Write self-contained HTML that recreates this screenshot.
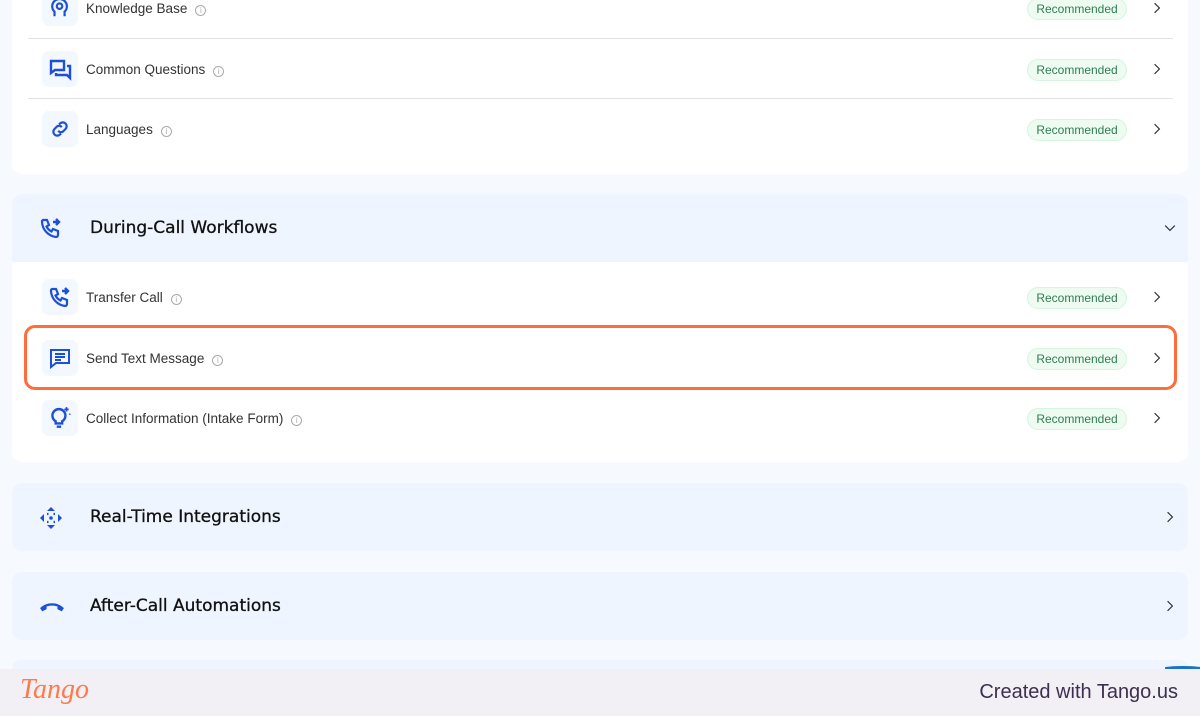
<!DOCTYPE html>
<html><head><style>
*{box-sizing:border-box;margin:0;padding:0}
html,body{width:1200px;height:716px;overflow:hidden}
body{background:#f6f9fd;font-family:"Liberation Sans",sans-serif;position:relative}
.card{position:absolute;left:12px;width:1176px;background:#fff;border-radius:10px}
.row{position:absolute;left:0;width:1176px;height:40px}
.ib{position:absolute;left:30px;top:2px;width:36px;height:36px;background:#f3f7fe;border-radius:7px;display:flex;align-items:center;justify-content:center}
.lbl{position:absolute;left:74px;top:13px;font-size:13.5px;color:#333}
.info{display:inline-block;width:11px;height:11px;border:1px solid #aaa;border-radius:50%;margin-left:8px;font-size:8px;color:#aaa;text-align:center;line-height:9px;vertical-align:0}
.badge{position:absolute;left:1015px;top:10px;width:100px;height:22px;border-radius:11px;background:#edfbf1;border:1px solid #d6f5de;color:#2f7d52;font-size:12px;text-align:center;line-height:20px}
.chev{position:absolute;left:1139px;top:14px}
.div{position:absolute;left:16px;width:1145px;height:1px;background:#e2e2e2}
.hdr{position:absolute;left:12px;width:1176px;height:68px;background:#eef5fe;border-radius:10px}
.hdr .t{position:absolute;left:78px;top:24px;font-family:"DejaVu Sans",sans-serif;font-size:17px;color:#111;-webkit-text-stroke:0.3px #111}
.hdr svg.ic{position:absolute;left:27px;top:22px}
.hdr .c{position:absolute;right:12px;top:28px}
</style></head><body>
<svg width="0" height="0" style="position:absolute"><defs>
<symbol id="ch" viewBox="0 0 10 10"><path d="M3 1l4 4-4 4" fill="none" stroke="#333" stroke-width="1"/></symbol>
<symbol id="ph" viewBox="0 0 24 24"><path d="M4 4h4l2 5-2.5 1.5a11 11 0 005 5L14 13l5 2v4a2 2 0 01-2 2A16 16 0 013 6a2 2 0 011-2z" fill="none" stroke="#1d4fd8" stroke-width="2.2"/><path d="M14 6h6M17 3l3 3-3 3" fill="none" stroke="#1d4fd8" stroke-width="2.4"/></symbol>
</defs></svg>

<div class="card" style="top:-20px;height:194px">
 <div class="row" style="top:8px"><div class="ib"><svg width="22" height="22" viewBox="0 0 24 24"><path d="M6 21v-5a8 8 0 1 1 11 0v5M11.5 7a3 3 0 1 0 0 6 3 3 0 0 0 0-6z" fill="none" stroke="#1d4fd8" stroke-width="2.4"/></svg></div><div class="lbl">Knowledge Base<span class="info">i</span></div><div class="badge">Recommended</div><svg class="chev" width="12" height="12"><use href="#ch"/></svg></div>
 <div class="div" style="top:58px"></div>
 <div class="row" style="top:69px"><div class="ib"><svg width="24" height="24" viewBox="0 0 24 24"><path d="M3 4h13v9H7l-4 3z M8 16v2h11l3 3V9h-3" fill="none" stroke="#1d4fd8" stroke-width="2.4"/></svg></div><div class="lbl">Common Questions<span class="info">i</span></div><div class="badge">Recommended</div><svg class="chev" width="12" height="12"><use href="#ch"/></svg></div>
 <div class="div" style="top:118px"></div>
 <div class="row" style="top:129px"><div class="ib"><svg width="22" height="22" viewBox="0 0 24 24"><path d="M10 14a4 4 0 005 1l3-3a4 4 0 00-6-6l-1 1M14 10a4 4 0 00-5-1l-3 3a4 4 0 006 6l1-1" fill="none" stroke="#1d4fd8" stroke-width="2.4"/></svg></div><div class="lbl">Languages<span class="info">i</span></div><div class="badge">Recommended</div><svg class="chev" width="12" height="12"><use href="#ch"/></svg></div>
</div>

<div class="card" style="top:194px;height:268px;background:#fff"></div>
<div class="hdr" style="top:194px;border-radius:10px 10px 0 0"><svg class="ic" width="24" height="24"><use href="#ph"/></svg><div class="t">During-Call Workflows</div><svg class="c" width="12" height="12" viewBox="0 0 10 10"><path d="M1 3l4 4 4-4" fill="none" stroke="#333" stroke-width="1"/></svg></div>
<div class="card" style="top:262px;height:200px;background:transparent">
 <div class="row" style="top:15px"><div class="ib"><svg width="24" height="24"><use href="#ph"/></svg></div><div class="lbl">Transfer Call<span class="info">i</span></div><div class="badge">Recommended</div><svg class="chev" width="12" height="12"><use href="#ch"/></svg></div>
 <div class="row" style="top:76px"><div class="ib"><svg width="24" height="24" viewBox="0 0 24 24"><path d="M3 4h18v13H8l-5 4z M7 8h10M7 11h10M7 14h6" fill="none" stroke="#1d4fd8" stroke-width="2"/></svg></div><div class="lbl">Send Text Message<span class="info">i</span></div><div class="badge">Recommended</div><svg class="chev" width="12" height="12"><use href="#ch"/></svg></div>
 <div class="row" style="top:136px"><div class="ib"><svg width="26" height="26" viewBox="0 0 24 24"><path d="M8 15a6 6 0 1 1 6 0v2H8z M9 20h4" fill="none" stroke="#1d4fd8" stroke-width="2.2"/><path d="M18 2v4M16 4h4M21 8v1" stroke="#1d4fd8" stroke-width="1.6"/></svg></div><div class="lbl">Collect Information (Intake Form)<span class="info">i</span></div><div class="badge">Recommended</div><svg class="chev" width="12" height="12"><use href="#ch"/></svg></div>
</div>
<div style="position:absolute;left:24px;top:325px;width:1153px;height:65px;border:3px solid #ff6d3a;border-radius:11px"></div>

<div class="hdr" style="top:483px"><svg class="ic" width="24" height="24" viewBox="0 0 24 24" style="top:23px"><path d="M12 1l4 4H8zM12 23l-4-4h8zM1 12l4-4v8zM23 12l-4 4V8z" fill="#1d4fd8"/><circle cx="12" cy="12" r="1.8" fill="#1d4fd8"/><path d="M8 8h1.5M14.5 8h1.5M8 16h1.5M14.5 16h1.5" stroke="#1d4fd8" stroke-width="2.2"/></svg><div class="t">Real-Time Integrations</div><svg class="c" width="12" height="12"><use href="#ch"/></svg></div>
<div class="hdr" style="top:572px"><svg class="ic" width="26" height="26" viewBox="0 0 24 24" style="top:22px"><path d="M1 13c6-6 16-6 22 0l-2 3-4-2v-2.5c-3-1-7-1-10 0V14l-4 2z" fill="#1d4fd8"/></svg><div class="t">After-Call Automations</div><svg class="c" width="12" height="12"><use href="#ch"/></svg></div>
<div class="hdr" style="top:660px;height:9px;border-radius:10px 10px 0 0"></div>
<div style="position:absolute;left:1165px;top:666px;width:36px;height:3px;border-radius:50% 50% 0 0;background:#1a73c4"></div>

<div style="position:absolute;left:0;top:669px;width:1200px;height:47px;background:#f3f0f5"></div>
<div style="position:absolute;left:20px;top:674px;font-family:'Liberation Serif',serif;font-style:italic;font-size:28px;color:#ff7a4a">Tango</div>
<div style="position:absolute;right:22px;top:681px;font-size:20px;color:#3d2f4f">Created with Tango.us</div>
</body></html>
